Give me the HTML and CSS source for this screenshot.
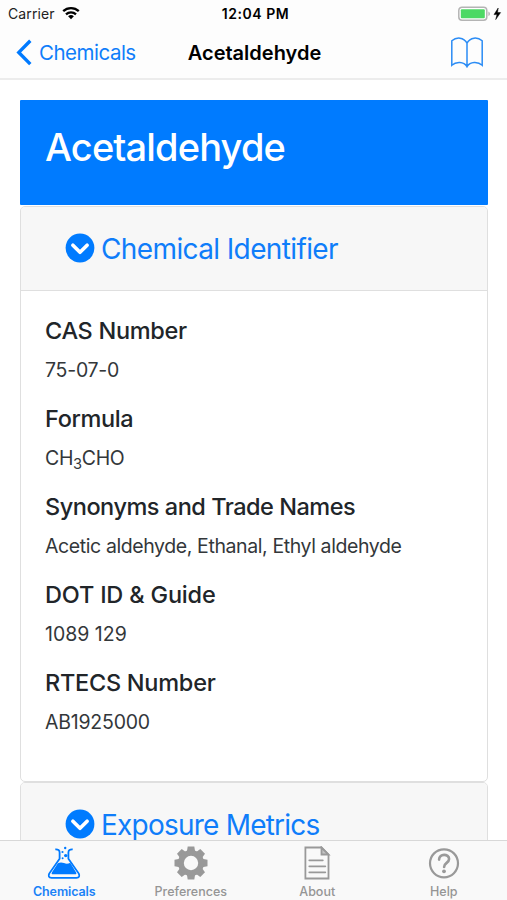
FILE: index.html
```html
<!DOCTYPE html>
<html lang="en">
<head>
<meta charset="utf-8">
<title>Acetaldehyde</title>
<link rel="stylesheet" href="styles.css">
</head>
<body>
<div class="screen">
  <header class="top">
    <div class="status">
      <div class="status-left"><span class="carrier">Carrier</span>
        <svg class="wifi" width="18" height="14" viewBox="0 0 18 14"><g fill="none" stroke="#000" stroke-width="2.3"><path d="M1.2 5.2a11.2 11.2 0 0 1 15.6 0"/><path d="M4 8.3a7.3 7.3 0 0 1 10 0"/></g><path d="M9 13.2 6.1 10.3a4.2 4.2 0 0 1 5.8 0z"/></svg>
      </div>
      <span class="time">12:04 PM</span>
      <div class="status-right">
        <svg width="44" height="16" viewBox="0 0 44 16"><rect x=".8" y="1.2" width="28" height="13" rx="3.2" fill="#fff" stroke="#b4b4b4" stroke-width="1.5"/><rect x="2.8" y="3.2" width="24" height="9" rx="1" fill="#4cd964"/><path d="M30.4 5.4q1.6.6 1.6 2.3t-1.6 2.3z" fill="#b4b4b4"/><path d="M40.2 2 36 8.6h3l-1.3 5 4.9-7h-3.1z" stroke="#000" stroke-width=".5"/></svg>
      </div>
    </div>
    <nav class="nav">
      <a class="back"><svg width="17" height="27" viewBox="0 0 17 27"><path d="M14.3 1.8 2.8 13.4l11.5 11.7" fill="none" stroke="#007aff" stroke-width="3.4"/></svg><span class="back-label">Chemicals</span></a>
      <h1 class="nav-title">Acetaldehyde</h1>
      <a class="book"><svg width="34" height="32" viewBox="0 0 34 32"><path d="M17 6.2C13.8 0 6.500-.2 1.800 3.800v24.500c4.300-4 12-3.800 15.200 1.200 3.200-5 10.900-5.200 15.200-1.200V3.800C27.500-.2 20.200 0 17 6.200v24.300" fill="none" stroke="#2b8cf5" stroke-width="1.500"/></svg></a>
    </nav>
  </header>
  <main class="content">
    <section class="banner"><h2 class="banner-title">Acetaldehyde</h2></section>
    <section class="card">
      <div class="card-header">
        <svg class="chev" width="30" height="30" viewBox="0 0 30 30"><circle cx="15" cy="15" r="14.400" fill="#007bff"/><path d="m7.900 12.300 7.100 7 7.100-7" fill="none" stroke="#fff" stroke-width="3.700" stroke-linecap="round" stroke-linejoin="round"/></svg>
        <span class="card-title identifier">Chemical Identifier</span>
      </div>
      <div class="card-body">
        <h3 class="h-cas">CAS Number</h3><p class="p-cas">75-07-0</p>
        <h3 class="h-formula">Formula</h3><p class="p-formula">CH<sub>3</sub>CHO</p>
        <h3 class="h-syn">Synonyms and Trade Names</h3><p class="p-syn">Acetic aldehyde, Ethanal, Ethyl aldehyde</p>
        <h3 class="h-dot">DOT ID &amp; Guide</h3><p class="p-dot">1089 129</p>
        <h3 class="h-rtecs">RTECS Number</h3><p class="p-rtecs">AB1925000</p>
      </div>
    </section>
    <section class="card">
      <div class="card-header">
        <svg class="chev" width="30" height="30" viewBox="0 0 30 30"><circle cx="15" cy="15" r="14.400" fill="#007bff"/><path d="m7.900 12.300 7.100 7 7.100-7" fill="none" stroke="#fff" stroke-width="3.700" stroke-linecap="round" stroke-linejoin="round"/></svg>
        <span class="card-title exposure">Exposure Metrics</span>
      </div>
    </section>
  </main>
  <footer class="tabs">
    <a class="tab active"><svg width="34" height="34" viewBox="0 0 34 34"><path d="M8.300 3.300q4.300-.3 4.300 3.200v6.300L2.200 27.600q-1.800 3.900 2.400 4.300h24.800q4.200-.4 2.400-4.300L21.400 12.800V6.500q0-3.500 4.300-3.200" fill="none" stroke="#007aff" stroke-width="1.800"/><path d="M10.800 17.300q3-1.700 6.200-.2 3.200 1.500 6.200-.3l5.800 9.400q1.200 2-1.200 2H6.200q-2.400 0-1.200-2z" fill="#007aff"/><g fill="#007aff"><circle cx="18.200" cy="2" r="1.200"/><circle cx="15.500" cy="6" r="1.100"/><circle cx="18.700" cy="9.600" r="1.700"/><circle cx="15.600" cy="12.200" r="1"/></g></svg><span class="t-chem">Chemicals</span></a>
    <a class="tab"><svg width="34" height="34" viewBox="0 0 34 34"><g fill="#999"><path id="tooth" d="M12.800 6 13.700.5h6.600l.9 5.500v22l-.9 5.500h-6.600l-.9-5.500z"/><use href="#tooth" transform="rotate(45 17 17)"/><use href="#tooth" transform="rotate(90 17 17)"/><use href="#tooth" transform="rotate(135 17 17)"/><circle cx="17" cy="17" r="13"/></g><circle cx="17" cy="17" r="7.200" fill="#f9f9f9"/></svg><span class="t-pref">Preferences</span></a>
    <a class="tab"><svg width="34" height="34" viewBox="0 0 34 34"><g fill="none" stroke="#999" stroke-width="1.800"><path d="M5.400 1.500h16.100l7 7v24H5.400z"/><path d="M21.500 1.500v7h7z" fill="#c4c4c4"/><path d="M9.300 14.300h13.500M9.300 20.300h16M9.300 26.300h16" stroke-linecap="round"/></g></svg><span class="t-about">About</span></a>
    <a class="tab"><svg width="34" height="34" viewBox="0 0 34 34"><circle cx="17" cy="17.300" r="14" fill="none" stroke="#999" stroke-width="2.200"/><path d="M12.100 13.600c0-6.400 10-6 10-.6 0 4-5 3.700-5 7.900" fill="none" stroke="#999" stroke-width="2.600" stroke-linecap="round"/><circle cx="17" cy="25.300" r="1.900" fill="#999"/></svg><span class="t-help">Help</span></a>
  </footer>
</div>
</body>
</html>
```
FILE: styles.css
```css
* { box-sizing: border-box; }
body { margin: 0; background: #fff; font-family: Inter, "Liberation Sans", sans-serif; }
h1, h2, h3, p { margin: 0; }
svg { display: block; flex: none; }
.screen { width: 507px; height: 900px; display: flex; flex-direction: column; overflow: hidden; white-space: nowrap; }
.top { flex: none; height: 80px; background: #fdfdfd; border-bottom: 2px solid #ececec; }
.status { height: 27px; display: grid; grid-template-columns: 1fr auto 1fr; align-items: center; padding: 0 5px 0 8px; }
.status-left { display: flex; align-items: center; gap: 7px; }
.carrier { font-size: 14px; line-height: 27px; color: #222; letter-spacing: 0.1px; }
.wifi { margin-top: -1px; }
.time { font-size: 14px; line-height: 27px; font-weight: 600; letter-spacing: 0.55px; padding-left: 1px; }
.status-right { display: flex; justify-content: flex-end; }
.nav { height: 51px; display: grid; grid-template-columns: 1fr auto 1fr; align-items: center; padding: 0 23px 0 16px; }
.back { display: flex; align-items: center; gap: 6px; color: #0f7dfa; font-size: 20.5px; letter-spacing: -0.5px; }
.nav-title { font-size: 20px; line-height: 28px; font-weight: 600; padding-left: 9px; }
.book { display: flex; justify-content: flex-end; }
.content { flex: 1; min-height: 0; overflow: hidden; padding: 20px 19px 0 20px; }
.banner { height: 105px; background: #007bff; padding: 23px 25px; border-radius: 1px; margin-bottom: 1px; }
.banner-title { color: #fff; font-size: 38px; line-height: 48px; font-weight: 450; letter-spacing: -0.85px; }
.card { border: 1px solid #dfdfdf; border-radius: 5px; overflow: hidden; background: #fff; }
.card-header { height: 84px; background: #f7f7f7; border-bottom: 1px solid #dfdfdf; padding: 0 44px; display: flex; align-items: center; gap: 6px; }
.chev { margin-top: -1px; }
.card-title { color: #0f7dfa; font-size: 28px; line-height: 34px; }
.identifier { letter-spacing: -0.62px; }
.exposure { letter-spacing: -0.78px; }
.card-body { padding: 25px 24px; height: 490px; color: #212529; }
.card-body h3 { font-size: 23.5px; line-height: 29px; font-weight: 500; margin-bottom: 10px; }
.card-body p { font-size: 19.5px; line-height: 31px; height: 30px; margin-bottom: 19px; color: #33373a; }
.card-body .h-cas { letter-spacing: -0.32px; }
.card-body .h-formula { letter-spacing: -0.36px; }
.card-body .h-syn { letter-spacing: -0.48px; }
.card-body .h-dot { letter-spacing: -0.18px; }
.card-body .h-rtecs { letter-spacing: -0.26px; }
.card-body .p-cas { letter-spacing: -0.25px; }
.card-body .p-formula { letter-spacing: -0.35px; }
.card-body .p-syn { letter-spacing: -0.4px; }
.card-body .p-rtecs { letter-spacing: -0.22px; }
sub { font-size: 75%; line-height: 0; position: relative; vertical-align: baseline; bottom: -0.25em; }
.tabs { flex: none; height: 60px; background: #f9f9f9; border-top: 1px solid #d8d8d8; display: grid; grid-template-columns: repeat(4, 126.5px); padding-left: 1px; }
.tab { display: flex; flex-direction: column; align-items: center; padding-top: 5px; color: #959595; font-size: 12.5px; font-weight: 500; line-height: 16px; }
.tab svg { margin-bottom: 4px; }
.active { color: #1a82f7; font-weight: 600; letter-spacing: -0.1px; }
```
